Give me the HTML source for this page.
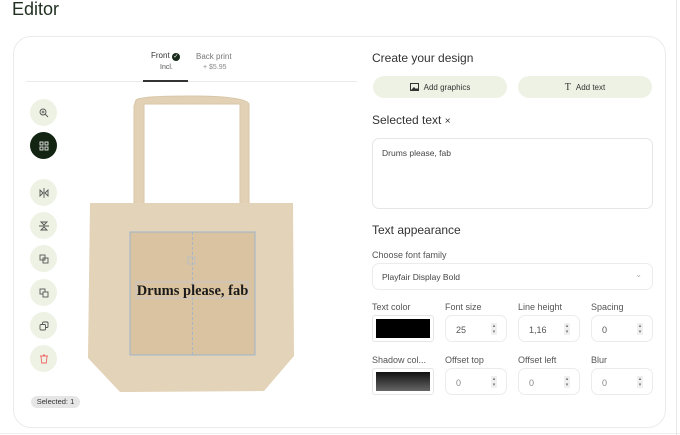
<!DOCTYPE html>
<html><head><style>
*{box-sizing:border-box;margin:0;padding:0}
body{width:680px;height:435px;background:#fff;font-family:"Liberation Sans",sans-serif;color:#222;position:relative;overflow:hidden}
.abs{position:absolute}
.page-edge{position:absolute;left:676px;top:0;width:1px;height:435px;background:#e8e8e8}
.bottom-edge{position:absolute;left:0;top:433px;width:680px;height:1px;background:#eee}
h1{position:absolute;left:12px;top:-1px;font-size:18px;font-weight:normal;color:#223022}
.card{position:absolute;left:13px;top:36px;width:653px;height:392px;border:1px solid #ebebeb;border-radius:18px}
.btn{position:absolute;left:30px;width:27px;height:27px;border-radius:50%;background:#eef2e4;display:flex;align-items:center;justify-content:center}
.lbl{position:absolute;font-size:9px;color:#555}
.h{position:absolute;left:372px;font-size:12px;color:#333}
.in{position:absolute;width:62px;height:27px;border:1px solid #ececec;border-radius:7px;font-size:9px;color:#555;padding:9px 0 0 10px}
.in .sp{position:absolute;right:9px;top:7px;width:6px;height:12px;background:#f0f0f0;font-size:5px;line-height:6px;text-align:center;color:#777}
.pill{position:absolute;top:76px;height:22px;border-radius:11px;background:#eef2e4;font-size:8px;color:#333;display:flex;align-items:center;justify-content:center;gap:5px}
</style></head><body>
<h1>Editor</h1>
<div class="page-edge"></div><div class="bottom-edge"></div>
<div class="card"></div>

<div class="abs" style="left:151px;top:51px;font-size:8px;color:#333">Front <span style="display:inline-block;width:8px;height:8px;border-radius:50%;background:#1a2a1a;color:#fff;font-size:6px;line-height:8px;text-align:center">✓</span></div>
<div class="abs" style="left:160px;top:64px;font-size:7px;color:#555">Incl.</div>
<div class="abs" style="left:196px;top:52px;font-size:8px;color:#777">Back print</div>
<div class="abs" style="left:203px;top:64px;font-size:7px;color:#888">+ $5.95</div>
<div class="abs" style="left:26px;top:81px;width:331px;height:1px;background:#eaeaea"></div>
<div class="abs" style="left:143px;top:80px;width:45px;height:2px;background:#333"></div>

<div class="btn" style="top:99px"><svg width="10" height="10" viewBox="0 0 10 10" fill="none" stroke="#555" stroke-width="0.9"><circle cx="4" cy="4" r="3"/><path d="M6.2 6.2L9 9M4 2.6v2.8M2.6 4h2.8"/></svg></div>
<div class="btn" style="top:132px;background:#132413"><svg width="10" height="10" viewBox="0 0 10 10" fill="none" stroke="#eee" stroke-width="0.9"><rect x="1" y="1" width="3" height="3"/><rect x="6" y="1" width="3" height="3"/><rect x="1" y="6" width="3" height="3"/><rect x="6" y="6" width="3" height="3"/></svg></div>
<div class="btn" style="top:179px"><svg width="10" height="10" viewBox="0 0 10 10" fill="none" stroke="#555" stroke-width="0.9"><path d="M5 0v10M1 2l3 3-3 3zM9 2l-3 3 3 3z"/></svg></div>
<div class="btn" style="top:212px"><svg width="10" height="10" viewBox="0 0 10 10" fill="none" stroke="#555" stroke-width="0.9"><path d="M0 5h10M2 1l3 3 3-3zM2 9l3-3 3 3z"/></svg></div>
<div class="btn" style="top:245px"><svg width="10" height="10" viewBox="0 0 10 10" fill="none" stroke="#555" stroke-width="0.9"><rect x="1" y="1" width="5" height="5"/><rect x="4" y="4" width="5" height="5"/></svg></div>
<div class="btn" style="top:279px"><svg width="10" height="10" viewBox="0 0 10 10" fill="none" stroke="#555" stroke-width="0.9"><rect x="1" y="1" width="5" height="5"/><rect x="4" y="4" width="5" height="5" fill="#eef2e4"/></svg></div>
<div class="btn" style="top:312px"><svg width="10" height="10" viewBox="0 0 10 10" fill="none" stroke="#555" stroke-width="0.9"><rect x="3.5" y="1" width="5.5" height="5.5" rx="1"/><rect x="1" y="3.5" width="5.5" height="5.5" rx="1" fill="#eef2e4"/></svg></div>
<div class="btn" style="top:345px"><svg width="10" height="10" viewBox="0 0 10 10" fill="none" stroke="#e66" stroke-width="0.9"><path d="M1 2h8M4 1h2M2 2l.7 7h4.6L8 2"/></svg></div>
<div class="abs" style="left:31px;top:396px;width:49px;height:12px;border-radius:6px;background:#e6e6e6;font-size:7.5px;color:#333;text-align:center;line-height:12px">Selected: 1</div>

<svg class="abs" style="left:85px;top:94px" width="212" height="300" viewBox="85 94 212 300">
<path d="M136 100 Q140 96 190 96 Q245 96 249 104 L249 205 L240 205 L240 104 L144 104 L144 205 L134 205 L134 106Z" fill="#e2d1b5" stroke="#d8c6a8" stroke-width="1"/>
<path d="M90 203 L293 203 L294 356 L264 391 L120 392 L88 358Z" fill="#e3d3b8"/>
<rect x="130" y="232" width="125" height="123" fill="#dac3a0" stroke="#9fb4cc" stroke-width="1"/>
<line x1="192.5" y1="232" x2="192.5" y2="355" stroke="#9fb4cc" stroke-width="0.8" stroke-dasharray="3,2"/>
<rect x="188" y="257" width="7" height="7" fill="none" stroke="#b5bfcc" stroke-width="0.8"/>
<rect x="136" y="282" width="112" height="16" fill="none" stroke="#c4c6cc" stroke-width="1"/>
<text x="192.5" y="295" text-anchor="middle" font-family="Liberation Serif,serif" font-weight="bold" font-size="14.5" fill="#1a1a1a">Drums please, fab</text>
</svg>

<div class="h" style="top:51px">Create your design</div>
<div class="pill" style="left:373px;width:134px"><svg width="9" height="8" viewBox="0 0 9 8"><rect x="0.5" y="0.5" width="8" height="7" fill="none" stroke="#333"/><path d="M1 7l3-3 2 2 1-1 2 2z" fill="#333"/></svg>Add graphics</div>
<div class="pill" style="left:518px;width:134px"><span style="font-family:'Liberation Serif',serif;font-size:10px">T</span>Add text</div>
<div class="h" style="top:113px">Selected text <span style="font-size:10px">×</span></div>
<div class="abs" style="left:372px;top:138px;width:281px;height:71px;border:1px solid #e6e6e6;border-radius:7px;font-size:8.5px;color:#444;padding:9px 9px">Drums please, fab</div>
<div class="h" style="top:223px">Text appearance</div>
<div class="lbl" style="left:372px;top:250px">Choose font family</div>
<div class="abs" style="left:372px;top:263px;width:281px;height:27px;border:1px solid #ececec;border-radius:7px;font-size:8.5px;color:#444;padding:8px 9px">Playfair Display Bold<span style="position:absolute;right:10px;top:6px;color:#aaa;font-size:8px">⌄</span></div>

<div class="lbl" style="left:372px;top:302px">Text color</div>
<div class="lbl" style="left:445px;top:302px">Font size</div>
<div class="lbl" style="left:518px;top:302px">Line height</div>
<div class="lbl" style="left:591px;top:302px">Spacing</div>
<div class="abs" style="left:372px;top:315px;width:62px;height:27px;border:1px solid #e6e6e6;border-radius:3px;padding:3px"><div style="width:100%;height:100%;background:#000"></div></div>
<div class="in" style="left:445px;top:315px">25<div class="sp">▴<br>▾</div></div>
<div class="in" style="left:518px;top:315px">1,16<div class="sp">▴<br>▾</div></div>
<div class="in" style="left:591px;top:315px">0<div class="sp">▴<br>▾</div></div>

<div class="lbl" style="left:372px;top:355px">Shadow col...</div>
<div class="lbl" style="left:445px;top:355px">Offset top</div>
<div class="lbl" style="left:518px;top:355px">Offset left</div>
<div class="lbl" style="left:591px;top:355px">Blur</div>
<div class="abs" style="left:372px;top:368px;width:62px;height:27px;border:1px solid #e6e6e6;border-radius:3px;padding:3px"><div style="width:100%;height:100%;background:linear-gradient(#111,#666)"></div></div>
<div class="in" style="left:445px;top:368px;color:#888">0<div class="sp">▴<br>▾</div></div>
<div class="in" style="left:518px;top:368px;color:#888">0<div class="sp">▴<br>▾</div></div>
<div class="in" style="left:591px;top:368px;color:#888">0<div class="sp">▴<br>▾</div></div>
</body></html>
